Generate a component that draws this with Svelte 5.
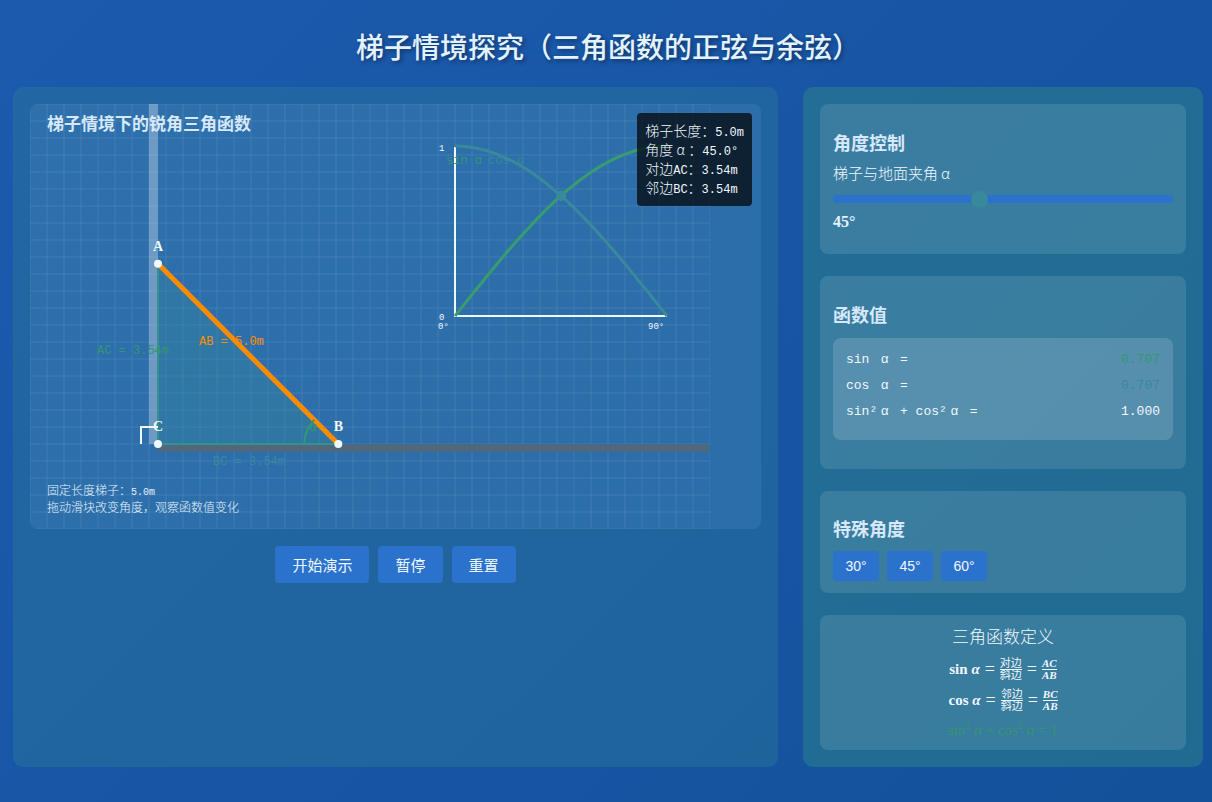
<script>
  const LENGTH = 5;
  const SCALE = 51;
  const corner = { x: 128, y: 340 };
  const plot = { x: 425, y: 212, w: 212, h: 170 };
  const presets = [30, 45, 60];

  let angle = $state(45);
  let timer = null;

  let rad = $derived((angle * Math.PI) / 180);
  let sin = $derived(Math.sin(rad));
  let cos = $derived(Math.cos(rad));
  let ac = $derived((LENGTH * sin).toFixed(2));
  let bc = $derived((LENGTH * cos).toFixed(2));
  let top = $derived(corner.y - LENGTH * SCALE * sin);
  let foot = $derived(corner.x + LENGTH * SCALE * cos);
  let dotX = $derived(plot.x + (angle / 90) * plot.w);

  // sampled once, the curves do not depend on the angle
  function curve(fn) {
    let points = [];
    for (let deg = 0; deg <= 90; deg += 2) {
      const x = plot.x + (deg / 90) * plot.w;
      const y = plot.y - fn((deg * Math.PI) / 180) * plot.h;
      points.push(`${x.toFixed(1)},${y.toFixed(1)}`);
    }
    return points.join(' ');
  }

  const sinCurve = curve(Math.sin);
  const cosCurve = curve(Math.cos);

  function start() {
    pause();
    timer = setInterval(() => {
      angle = angle >= 85 ? 15 : angle + 1;
    }, 60);
  }

  function pause() {
    clearInterval(timer);
  }

  function reset() {
    pause();
    angle = 45;
  }
</script>

<div class="page">
  <h1>梯子情境探究（三角函数的正弦与余弦）</h1>

  <main>
    <section class="panel left">
      <div class="board">
        <svg width="680" height="425" viewBox="0 0 680 425">
          <g class="grid">
            {#each Array(41) as _, i}
              <line x1={i * 17} y1="0" x2={i * 17} y2="425" />
            {/each}
            {#each Array(26) as _, i}
              <line x1="0" y1={i * 17} x2="680" y2={i * 17} />
            {/each}
          </g>

          <rect class="wall" x="119" y="0" width="9" height="340" />
          <rect class="ground" x="128" y="340" width="552" height="8" />

          <polygon class="area" points="{corner.x},{top} {corner.x},{corner.y} {foot},{corner.y}" />
          <line class="side" x1={corner.x} y1={top} x2={corner.x} y2={corner.y} />
          <line class="side" x1={corner.x} y1={corner.y} x2={foot} y2={corner.y} />
          <line class="ladder" x1={corner.x} y1={top} x2={foot} y2={corner.y} />
          <path class="arc" d="M{foot - 34} {corner.y} A34 34 0 0 1 {foot - 34 * cos} {corner.y - 34 * sin}" />
          <path class="square" d="M111 340 V323 H128" />
          <circle class="point" cx={corner.x} cy={top} r="4" />
          <circle class="point" cx={corner.x} cy={corner.y} r="4" />
          <circle class="point" cx={foot} cy={corner.y} r="4" />

          <text class="name" x={corner.x} y={top - 13}>A</text>
          <text class="name" x={foot} y="327">B</text>
          <text class="name" x={corner.x} y="327">C</text>
          <text class="label green" x="67" y={(top + corner.y) / 2}>AC = {ac}m</text>
          <text class="label teal" x="183" y="361">BC = {bc}m</text>
          <text class="label orange" x="169" y="241">AB = 5.0m</text>
          <text class="label green" x={foot - 29} y="327">α</text>

          <polyline class="axis" points="425,43 425,212 637,212" />
          <polyline class="curve sin" points={sinCurve} />
          <polyline class="curve cos" points={cosCurve} />
          <circle class="dot sin" cx={dotX} cy={plot.y - sin * plot.h} r="5" />
          <circle class="dot cos" cx={dotX} cy={plot.y - cos * plot.h} r="5" />
          <text class="tick" x="409" y="47">1</text>
          <text class="tick" x="409" y="216">0</text>
          <text class="tick" x="408" y="225">0°</text>
          <text class="tick" x="618" y="225">90°</text>
          <text class="legend green" x="416" y="60">sin α</text>
          <text class="legend teal" x="458" y="60">cos α</text>

          <text class="caption" x="17" y="26">梯子情境下的锐角三角函数</text>
          <text class="note" x="17" y="391">固定长度梯子：<tspan class="num">5.0m</tspan></text>
          <text class="note" x="17" y="408">拖动滑块改变角度，观察函数值变化</text>
        </svg>

        <div class="tooltip">
          <div>梯子长度：<span class="mono">5.0m</span></div>
          <div>角度<span class="alpha">α</span>：<span class="mono">{angle.toFixed(1)}°</span></div>
          <div>对边<span class="mono">AC</span>：<span class="mono">{ac}m</span></div>
          <div>邻边<span class="mono">BC</span>：<span class="mono">{bc}m</span></div>
        </div>
      </div>

      <div class="actions">
        <button onclick={start}>开始演示</button>
        <button onclick={pause}>暂停</button>
        <button onclick={reset}>重置</button>
      </div>
    </section>

    <aside class="panel right">
      <div class="card control">
        <h3>角度控制</h3>
        <label for="angle">梯子与地面夹角<span class="alpha">α</span></label>
        <input id="angle" type="range" min="15" max="85" bind:value={angle} />
        <output for="angle">{angle}°</output>
      </div>

      <div class="card">
        <h3>函数值</h3>
        <div class="values">
          <div class="row">
            <span>sin <span class="alpha">α</span> =</span>
            <span class="green">{sin.toFixed(3)}</span>
          </div>
          <div class="row">
            <span>cos <span class="alpha">α</span> =</span>
            <span class="teal">{cos.toFixed(3)}</span>
          </div>
          <div class="row">
            <span>sin²<span class="alpha">α</span> + cos²<span class="alpha">α</span> =</span>
            <span>{(sin * sin + cos * cos).toFixed(3)}</span>
          </div>
        </div>
      </div>

      <div class="card special">
        <h3>特殊角度</h3>
        <div class="presets">
          {#each presets as p}
            <button onclick={() => (angle = p)}>{p}°</button>
          {/each}
        </div>
      </div>

      <div class="card defs">
        <div class="title">三角函数定义</div>
        <div class="formula">
          <span>sin <i>α</i></span><span class="eq">=</span>
          <span class="frac"><span>对边</span><span>斜边</span></span>
          <span class="eq">=</span>
          <span class="frac"><i>AC</i><i>AB</i></span>
        </div>
        <div class="formula">
          <span>cos <i>α</i></span><span class="eq">=</span>
          <span class="frac"><span>邻边</span><span>斜边</span></span>
          <span class="eq">=</span>
          <span class="frac"><i>BC</i><i>AB</i></span>
        </div>
        <div class="identity">sin<sup>2</sup> <i>α</i> + cos<sup>2</sup> <i>α</i> = 1</div>
      </div>
    </aside>
  </main>
</div>

<style>
  :global(body) {
    background: #17549f;
  }

  .page {
    min-height: 100vh;
    box-sizing: border-box;
    padding: 26px 9px 35px 13px;
    background: linear-gradient(135deg, #1c5aae, #14519b);
    color: #f0f8ff;
    font-family: "Noto Sans CJK SC", sans-serif;
    font-size: 15px;
  }

  h1 {
    margin: 0 0 21px;
    font-size: 28px;
    line-height: 40px;
    font-weight: 500;
    text-align: center;
    color: #e3f2fd;
    text-shadow: 2px 2px 4px rgba(0, 0, 0, 0.4);
  }

  main {
    display: grid;
    grid-template-columns: 1fr 400px;
    gap: 25px;
  }

  .panel {
    padding: 17px;
    border-radius: 10px;
  }

  .left {
    background: rgba(46, 125, 150, 0.4);
  }

  .right {
    display: flex;
    flex-direction: column;
    gap: 22px;
    background: rgba(46, 139, 132, 0.45);
  }

  .board {
    position: relative;
    overflow: hidden;
    border-radius: 8px;
    background: rgba(70, 130, 190, 0.35);
  }

  svg {
    display: block;
    max-width: 100%;
  }

  .grid line {
    stroke: rgba(255, 255, 255, 0.09);
    stroke-width: 1;
  }

  .wall {
    fill: rgba(255, 255, 255, 0.3);
  }

  .ground {
    fill: #50687e;
  }

  .area {
    fill: rgba(56, 142, 142, 0.25);
  }

  .side {
    stroke: #38908c;
    stroke-width: 2;
  }

  .ladder {
    stroke: #ff8c00;
    stroke-width: 5;
  }

  .arc {
    fill: none;
    stroke: #359672;
    stroke-width: 2;
  }

  .square,
  .axis {
    fill: none;
    stroke: #f0f8ff;
    stroke-width: 2;
  }

  .point {
    fill: #f0f8ff;
  }

  .curve {
    fill: none;
    stroke-width: 3;
  }

  .curve.sin {
    stroke: #389c70;
  }

  .curve.cos {
    stroke: #3a889c;
  }

  .dot.sin {
    fill: #389c70;
  }

  .dot.cos {
    fill: #3a889c;
  }

  .name {
    fill: #f0f8ff;
    font: bold 14px "Liberation Serif", serif;
    text-anchor: middle;
  }

  .label,
  .legend {
    font: 12px "Liberation Mono", monospace;
  }

  .green {
    color: #359672;
    fill: #359672;
  }

  .teal {
    color: #38899a;
    fill: #38899a;
  }

  .orange {
    fill: #ff8c00;
  }

  .tick {
    fill: #f0f8ff;
    font: 9px "Liberation Mono", monospace;
  }

  .caption {
    fill: #d6e8fa;
    font-size: 17px;
    font-weight: bold;
  }

  .note {
    fill: #e3f2fd;
    font-size: 12px;
    font-weight: 300;
  }

  .num {
    font: 10px "Liberation Mono", monospace;
  }

  .mono {
    font-family: "Liberation Mono", monospace;
    font-size: 12px;
  }

  .alpha {
    display: inline-block;
    width: 15px;
    text-align: center;
  }

  .tooltip {
    position: absolute;
    top: 9px;
    right: 9px;
    padding: 8px 8px 9px;
    border-radius: 4px;
    background: rgba(0, 0, 0, 0.7);
    font-size: 14px;
    font-weight: 300;
    line-height: 18px;
    white-space: nowrap;
  }

  .tooltip div {
    height: 19px;
  }

  .actions {
    display: flex;
    justify-content: center;
    gap: 9px;
    margin-top: 17px;
  }

  button {
    border: none;
    border-radius: 4px;
    background: #2b72cc;
    color: #f0f8ff;
    cursor: pointer;
  }

  .actions button {
    padding: 0 17px;
    height: 37px;
    font: 15px "Noto Sans CJK SC", sans-serif;
  }

  .card {
    padding: 26px 13px 29px;
    border-radius: 8px;
    background: rgba(255, 255, 255, 0.11);
  }

  h3 {
    margin: 0 0 11px;
    font-size: 18px;
    line-height: 25px;
    font-weight: bold;
    color: #d6e8fa;
  }

  .control {
    padding-bottom: 23px;
  }

  .control h3 {
    margin-bottom: 6px;
  }

  label {
    display: block;
    line-height: 24px;
    font-weight: 300;
  }

  input[type='range'] {
    appearance: none;
    display: block;
    width: 100%;
    height: 8px;
    margin: 10px 0 9px;
    border-radius: 4px;
    background: #2b72cc;
  }

  input[type='range']::-webkit-slider-thumb {
    appearance: none;
    width: 17px;
    height: 17px;
    border-radius: 50%;
    background: #38899a;
  }

  output {
    display: block;
    font: bold 16px/19px "Liberation Serif", serif;
    color: #e3f2fd;
  }

  .values {
    padding: 9px 13px 15px;
    border-radius: 8px;
    background: rgba(255, 255, 255, 0.15);
    font-family: "Liberation Mono", monospace;
    font-size: 13px;
    line-height: 26px;
  }

  .row {
    display: flex;
    justify-content: space-between;
  }

  .special {
    padding: 25px 13px 12px;
  }

  .special h3 {
    margin-bottom: 10px;
  }

  .presets {
    display: flex;
    gap: 8px;
  }

  .presets button {
    width: 46px;
    height: 30px;
    padding: 0;
    font: 14px "Liberation Sans", sans-serif;
  }

  .defs {
    padding: 9px 13px 6px;
    text-align: center;
  }

  .title {
    margin-bottom: 6px;
    font-size: 17px;
    line-height: 24px;
    font-weight: 300;
  }

  .formula {
    display: flex;
    justify-content: center;
    align-items: center;
    height: 31px;
    font: bold 15px "Liberation Serif", serif;
  }

  .eq {
    margin: 0 5px;
    font-size: 18px;
    font-weight: normal;
  }

  .frac {
    display: flex;
    flex-direction: column;
    font-size: 11px;
    line-height: 11px;
    font-family: "Liberation Serif", "Noto Sans CJK SC", serif;
  }

  .frac span {
    font-weight: normal;
  }

  .frac > :first-child {
    border-bottom: 1px solid #f0f8ff;
  }

  .identity {
    font: 15px/28px "Liberation Serif", serif;
    color: #359672;
  }

  sup {
    font-size: 10px;
    line-height: 0;
  }
</style>
